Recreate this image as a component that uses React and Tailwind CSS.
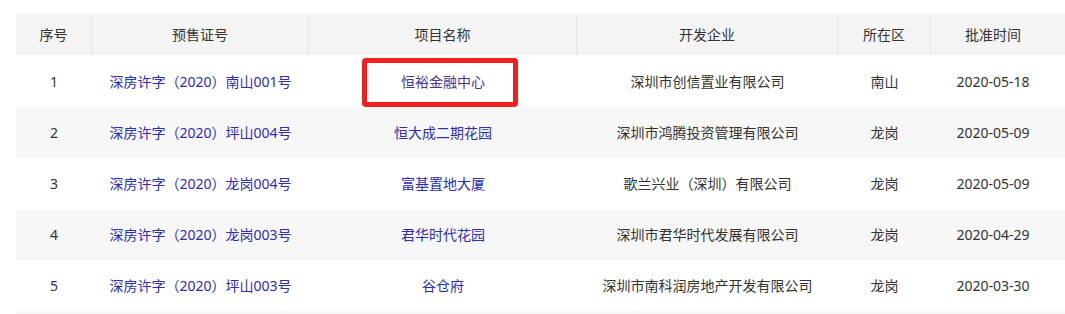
const cols = 'grid grid-cols-[76px_217px_268px_261px_93px_124px]';

const rows = [
  { no: '1', permit: ['深房许字', '2020', '南山001号'], name: '恒裕金融中心', dev: ['深圳市创信置业有限公司'], area: '南山', date: '2020-05-18', mark: true },
  { no: '2', permit: ['深房许字', '2020', '坪山004号'], name: '恒大成二期花园', dev: ['深圳市鸿腾投资管理有限公司'], area: '龙岗', date: '2020-05-09' },
  { no: '3', permit: ['深房许字', '2020', '龙岗004号'], name: '富基置地大厦', dev: ['歌兰兴业', '深圳', '有限公司'], area: '龙岗', date: '2020-05-09' },
  { no: '4', permit: ['深房许字', '2020', '龙岗003号'], name: '君华时代花园', dev: ['深圳市君华时代发展有限公司'], area: '龙岗', date: '2020-04-29' },
  { no: '5', permit: ['深房许字', '2020', '坪山003号'], name: '谷仓府', dev: ['深圳市南科润房地产开发有限公司'], area: '龙岗', date: '2020-03-30' },
];

const heads = ['序号', '预售证号', '项目名称', '开发企业', '所在区', '批准时间'];

// full-width brackets centred in their box, like the reference's system font
const Paren = ({ children }) => (
  <span style={{ fontFamily: '"Noto Sans CJK TC", sans-serif' }}>{children}</span>
);

const Bracketed = ({ parts }) =>
  parts.length === 1 ? (
    <span>{parts[0]}</span>
  ) : (
    <span>
      {parts[0]}
      <Paren>（</Paren>
      {parts[1]}
      <Paren>）</Paren>
      {parts[2]}
    </span>
  );

const App = () => {
  return (
    <div
      className="w-[1065px] h-[314px] overflow-hidden bg-white pt-[14px] pl-[16px] text-[14px] text-[#333]"
      style={{ fontFamily: '"Noto Sans", "Noto Sans CJK SC", sans-serif' }}
    >
      {/* header */}
      <div className={`${cols} h-[41px] bg-[#f4f4f4]`}>
        {heads.map((h, i) => (
          <div
            key={h}
            className={`flex items-center justify-center ${i < heads.length - 1 ? 'border-r border-[#e4e4e4]' : ''}`}
          >
            {h}
          </div>
        ))}
      </div>

      {/* body */}
      {rows.map((r, i) => (
        <div
          key={r.no}
          className={`${cols} ${i === 0 ? 'h-[52px]' : 'h-[51px]'} ${i % 2 === 1 ? 'bg-[#f7f7f7]' : 'bg-white'}`}
        >
          <div className="flex items-center justify-center">{r.no}</div>
          <div className="flex items-center justify-center text-[#2d2db8]">
            <Bracketed parts={r.permit} />
          </div>
          <div className="relative flex items-center justify-center">
            {r.mark ? (
              <>
                <span className="text-[#4a3590]">{r.name}</span>
                <div className="absolute left-[53px] top-[3px] w-[156px] h-[49px] border-[5px] border-[#f51e1e] rounded-[4px]" />
              </>
            ) : (
              <span className="text-[#2d2db8]">{r.name}</span>
            )}
          </div>
          <div className="flex items-center justify-center">
            <Bracketed parts={r.dev} />
          </div>
          <div className="flex items-center justify-center">{r.area}</div>
          <div className="flex items-center justify-center">{r.date}</div>
        </div>
      ))}
      <div className={`${cols} h-[51px] bg-[#f7f7f7]`} />
    </div>
  );
};

export default App;
